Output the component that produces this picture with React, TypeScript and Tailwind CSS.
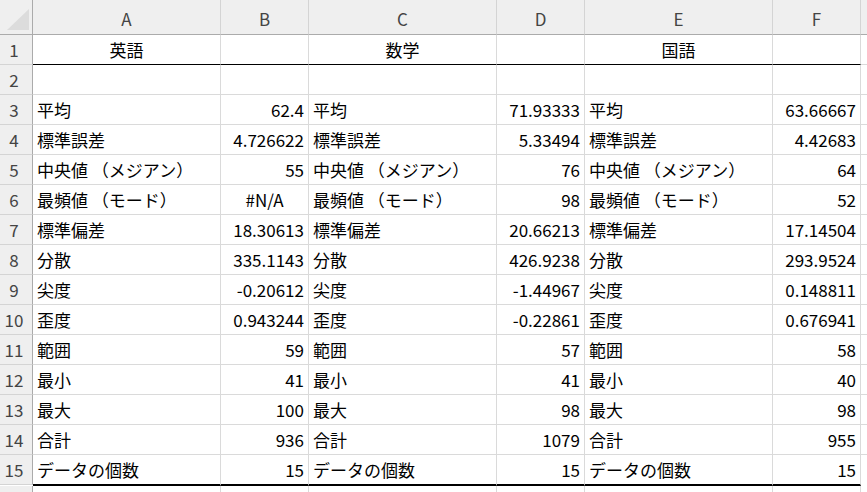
import React from "react";

const cols = ["A", "B", "C", "D", "E", "F", ""];

type Row = [string, string, string, string, string, string];

const rows: (Row | null)[] = [
  null,
  null,
  ["平均", "62.4", "平均", "71.93333", "平均", "63.66667"],
  ["標準誤差", "4.726622", "標準誤差", "5.33494", "標準誤差", "4.42683"],
  ["中央値 （メジアン）", "55", "中央値 （メジアン）", "76", "中央値 （メジアン）", "64"],
  ["最頻値 （モード）", "#N/A", "最頻値 （モード）", "98", "最頻値 （モード）", "52"],
  ["標準偏差", "18.30613", "標準偏差", "20.66213", "標準偏差", "17.14504"],
  ["分散", "335.1143", "分散", "426.9238", "分散", "293.9524"],
  ["尖度", "-0.20612", "尖度", "-1.44967", "尖度", "0.148811"],
  ["歪度", "0.943244", "歪度", "-0.22861", "歪度", "0.676941"],
  ["範囲", "59", "範囲", "57", "範囲", "58"],
  ["最小", "41", "最小", "41", "最小", "40"],
  ["最大", "100", "最大", "98", "最大", "98"],
  ["合計", "936", "合計", "1079", "合計", "955"],
  ["データの個数", "15", "データの個数", "15", "データの個数", "15"],
];

const titles = ["英語", "", "数学", "", "国語", ""];

export default function App() {
  const font = { fontFamily: '"Noto Sans CJK JP", "Noto Sans", sans-serif' };
  return (
    <div
      className="w-[867px] h-[492px] overflow-hidden bg-white text-[17px] text-black"
      style={font}
    >
      <div className="grid grid-cols-[33px_188px_88px_188px_88px_188px_88px_188px] grid-rows-[35px_repeat(14,30px)_31px_30px]">
        {/* header row */}
        <div className="relative bg-[#efefef] border-r border-r-[#ababab] border-b border-b-[#ababab]">
          <svg className="absolute left-0 top-0" width="32" height="34" viewBox="0 0 32 34">
            <polygon points="29,9 29,30 7,30" fill="#dcdcdc" />
          </svg>
        </div>
        {cols.map((c, k) => (
          <div
            key={k}
            className="flex items-center justify-center pt-[3px] bg-[#efefef] border-r border-r-[#d4d4d4] border-b border-b-[#ababab] text-[#444444]"
          >
            {c}
          </div>
        ))}

        {rows.map((r, i) => {
          const n = i + 1;
          const isTitle = n === 1;
          const isLast = n === 15;
          const bottom = isTitle
            ? "border-b border-b-black"
            : isLast
            ? "border-b-2 border-b-black"
            : "border-b border-b-[#dadada]";
          return (
            <React.Fragment key={n}>
              <div
                className={`flex items-center justify-center pr-[4px] bg-[#efefef] border-r border-r-[#ababab] border-b border-b-[#d4d4d4] text-[#444444] ${
                  isLast ? "h-[30px]" : ""
                }`}
              >
                {n}
              </div>
              {Array.from({ length: 6 }).map((_, j) => {
                let content = "";
                let align = "justify-start pl-[4px]";
                if (isTitle) {
                  content = titles[j];
                  align = "justify-center";
                } else if (r) {
                  content = r[j];
                  if (j % 2 === 1) {
                    align =
                      content === "#N/A"
                        ? "justify-center"
                        : "justify-end pr-[4px]";
                  }
                }
                return (
                  <div
                    key={j}
                    className={`flex items-center whitespace-nowrap overflow-visible border-r border-r-[#dadada] ${bottom} ${align}`}
                  >
                    {content}
                  </div>
                );
              })}
              <div
                className={`border-r border-r-[#dadada] ${
                  isLast ? "border-b-2 border-b-transparent" : "border-b border-b-[#dadada]"
                }`}
              />
            </React.Fragment>
          );
        })}
        {/* row 16 */}
        <div className="bg-[#efefef] border-r border-r-[#ababab]" />
        {cols.map((_, k) => (
          <div key={k} className="border-r border-r-[#dadada]" />
        ))}
      </div>
    </div>
  );
}
